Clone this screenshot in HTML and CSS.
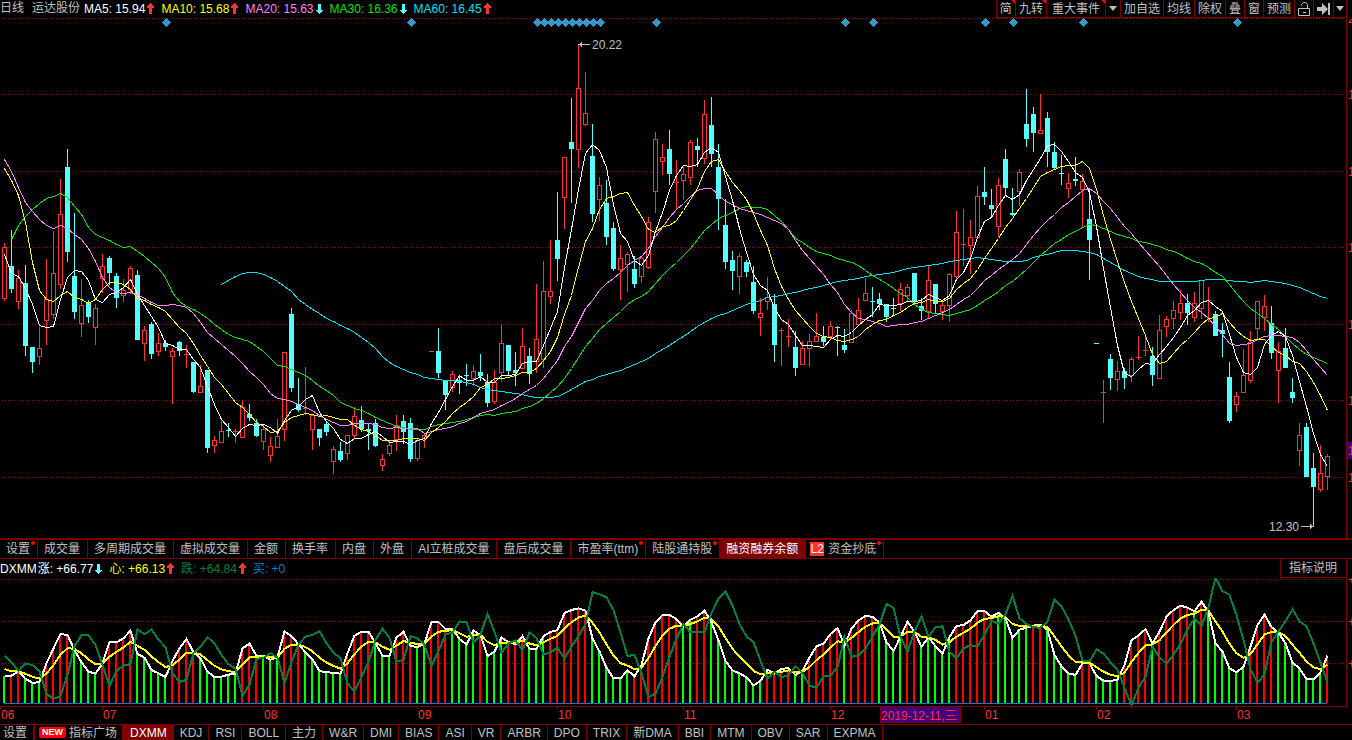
FILE: index.html
```html
<!DOCTYPE html>
<html lang="zh-CN">
<head>
    <meta charset="UTF-8">
    <meta name="viewport" content="width=device-width, initial-scale=1.0">
    <title>运达股份 日线</title>
    <link rel="stylesheet" href="styles.css">
</head>
<body>

    <header class="top-bar">
        <div class="legend">
            <span class="period">日线</span>
            <span class="stock">运达股份</span>
            <span class="item white">MA5: 15.94<svg class="arrow up" viewBox="0 0 7 12"><path d="M3 0h1v1h1v1h1v1h1v2H5v6H2V5H0V3h1V2h1V1h1z"/></svg></span>
            <span class="item yellow">MA10: 15.68<svg class="arrow up" viewBox="0 0 7 12"><path d="M3 0h1v1h1v1h1v1h1v2H5v6H2V5H0V3h1V2h1V1h1z"/></svg></span>
            <span class="item pink">MA20: 15.63<svg class="arrow down" viewBox="0 0 7 12"><path d="M2 1h3v6h2v1H6v1H5v1H4v1H3v-1H2V9H1V8H0V7h2z"/></svg></span>
            <span class="item green">MA30: 16.36<svg class="arrow down" viewBox="0 0 7 12"><path d="M2 1h3v6h2v1H6v1H5v1H4v1H3v-1H2V9H1V8H0V7h2z"/></svg></span>
            <span class="item aqua">MA60: 16.45<svg class="arrow up" viewBox="0 0 7 12"><path d="M3 0h1v1h1v1h1v1h1v2H5v6H2V5H0V3h1V2h1V1h1z"/></svg></span>
        </div>
        <div class="toolbar">
            <button class="flag">简</button>
            <button class="flag">九转</button>
            <button class="flag wide">重大事件</button>
            <button aria-label="更多事件"><svg width="8" height="5" viewBox="0 0 8 5"><path d="M0 0h8L4 5z"/></svg></button>
            <button>加自选</button>
            <button>均线</button>
            <button>除权</button>
            <button>叠</button>
            <button>窗</button>
            <button>预测</button>
            <button aria-label="锁定"><svg width="12" height="14" viewBox="0 0 12 14"><path class="line" d="M3.500 3.500v-1l2-2h2l2 2v4M.5 6.500h11v7H.5zM5 10.500h3"/></svg></button>
            <button aria-label="跳到最新"><svg width="13" height="12" viewBox="0 0 13 12"><path d="M0 4h5V0l6 6-6 6V8H0zM11 0h2v12h-2z"/></svg></button>
            <button class="last" aria-label="菜单"><svg width="8" height="5" viewBox="0 0 8 5"><path d="M0 0h8L4 5z"/></svg></button>
        </div>
    </header>

    <svg id="price" class="chart" viewBox="0 18 1352 520"></svg>

    <nav class="tabs">
        <button class="dot">设置</button>
        <button>成交量</button>
        <button>多周期成交量</button>
        <button>虚拟成交量</button>
        <button>金额</button>
        <button>换手率</button>
        <button>内盘</button>
        <button>外盘</button>
        <button>AI立桩成交量</button>
        <button>盘后成交量</button>
        <button class="dot">市盈率(ttm)</button>
        <button class="dot">陆股通持股</button>
        <button class="active">融资融券余额</button>
        <button class="dot level2"><span class="l2">L2</span>资金抄底</button>
    </nav>

    <div class="sub-bar">
        <div class="legend">
            <span class="name">DXMM</span>
            <span class="item white">涨: +66.77<svg class="arrow down" viewBox="0 0 7 12"><path d="M2 1h3v6h2v1H6v1H5v1H4v1H3v-1H2V9H1V8H0V7h2z"/></svg></span>
            <span class="item yellow">心: +66.13<svg class="arrow up" viewBox="0 0 7 12"><path d="M3 0h1v1h1v1h1v1h1v2H5v6H2V5H0V3h1V2h1V1h1z"/></svg></span>
            <span class="item dark-green">跌: +64.84<svg class="arrow up" viewBox="0 0 7 12"><path d="M3 0h1v1h1v1h1v1h1v2H5v6H2V5H0V3h1V2h1V1h1z"/></svg></span>
            <span class="item blue">买: +0</span>
        </div>
        <button class="explain">指标说明</button>
    </div>

    <svg id="dxmm" class="chart" viewBox="0 578 1352 146"></svg>

    <nav class="indicators">
        <button class="setup">设置</button>
        <button class="market"><span class="new">NEW</span>指标广场</button>
        <button class="active">DXMM</button>
        <button>KDJ</button>
        <button>RSI</button>
        <button>BOLL</button>
        <button>主力</button>
        <button>W&amp;R</button>
        <button>DMI</button>
        <button>BIAS</button>
        <button>ASI</button>
        <button>VR</button>
        <button>ARBR</button>
        <button>DPO</button>
        <button>TRIX</button>
        <button>新DMA</button>
        <button>BBI</button>
        <button>MTM</button>
        <button>OBV</button>
        <button>SAR</button>
        <button>EXPMA</button>
    </nav>

    <script src="chart.js"></script>
</body>
</html>
```
FILE: styles.css
```css
body {
    font-family: "Liberation Sans", "Noto Sans CJK SC", sans-serif;
    font-size: 12px;
    line-height: 16px;
    margin: 0;
    background-color: #000;
    color: #c0c0c0;
}

button {
    font: inherit;
    color: inherit;
    background: none;
    border: none;
    border-radius: 0;
    margin: 0;
    padding: 0;
    cursor: pointer;
    white-space: nowrap;
    flex-shrink: 0;
}

/* legends */
.legend {
    display: flex;
    gap: 7px;
    white-space: nowrap;
}

.item {
    display: flex;
    align-items: center;
}

.period {
    margin-right: 1px;
}

.stock {
    margin-right: -3px;
}

.name {
    margin-right: -6px;
}

.arrow {
    width: 7px;
    height: 12px;
    margin-left: 2px;
    shape-rendering: crispEdges;
}

.up { fill: #ff3232; }
.down { fill: #54ffff; }
.white, .name { color: #fff; }
.yellow { color: #ff0; }
.pink { color: #ff80ff; }
.green { color: #00e600; }
.aqua { color: #00e0f0; }
.dark-green { color: #008040; }
.blue { color: #0080d0; }

/* top bar */
.top-bar {
    display: flex;
    justify-content: space-between;
    height: 18px;
}

.toolbar {
    display: flex;
    height: 17px;
    margin-right: 5px;
    border-right: 1px solid #800000;
    border-bottom: 1px solid #800000;
}

.toolbar button {
    display: flex;
    align-items: center;
    position: relative;
    padding: 0 3px;
    border-left: 1px solid #800000;
    fill: #c0c0c0;
}

.toolbar .wide {
    padding: 0 5px;
}

.toolbar .last {
    padding: 0 2px;
}

.line {
    fill: none;
    stroke: #c0c0c0;
}

.flag::after {
    content: "";
    position: absolute;
    top: 0;
    right: 0;
    border-top: 4px solid #f00;
    border-left: 4px solid transparent;
}

/* charts */
.chart {
    display: block;
    width: 100%;
    height: auto;
    shape-rendering: crispEdges;
}

.grid {
    stroke: #a00000;
    stroke-dasharray: 1 2;
}

.frame {
    stroke: #800000;
}

.curve {
    fill: none;
}

.note {
    fill: #c0c0c0;
}

.note-line {
    stroke: #c0c0c0;
}

.axis {
    fill: #ff3232;
}

.cursor {
    fill: #400080;
}

.marker {
    fill: #3399cc;
}

/* tabs under the price chart */
.tabs {
    display: flex;
    height: 18px;
    border-top: 2px solid #800000;
    border-bottom: 1px solid #800000;
    line-height: 18px;
    overflow: hidden;
}

.tabs button {
    position: relative;
    padding: 0 7px 0 6px;
    border-right: 1px solid #800000;
}

.tabs .level2 {
    padding-left: 4px;
}

.tabs .active,
.indicators .active {
    background-color: #800000;
    color: #fff;
}

.dot::after {
    content: "";
    position: absolute;
    top: 1px;
    right: 2px;
    width: 4px;
    height: 4px;
    border-radius: 2px;
    background-color: #f00;
}

.l2 {
    display: inline-block;
    width: 14px;
    margin-right: 4px;
    background-color: #ff3232;
    color: #fff;
    line-height: 14px;
    text-align: center;
}

.sub-bar {
    display: flex;
    justify-content: space-between;
    height: 19px;
    line-height: 20px;
}

.explain {
    padding: 0 9px 0 8px;
    margin-right: 5px;
    border: 1px solid #800000;
    border-top: none;
    line-height: 18px;
}

/* indicator list */
.indicators {
    display: flex;
    height: 15px;
    border-top: 1px solid #800000;
    line-height: 16px;
    overflow: hidden;
}

.indicators button {
    padding: 0 6px;
    border-right: 1px solid #800000;
}

.indicators .setup {
    padding: 0 6px 0 3px;
    border-right-width: 2px;
}

.indicators .market {
    display: flex;
    align-items: center;
    gap: 3px;
    padding: 0 5px 0 4px;
}

.indicators .active {
    padding: 0 7px;
    border-right: none;
}

.new {
    padding: 0 3px;
    border-radius: 2px;
    background-color: #f00;
    color: #fff;
    font-size: 9px;
    font-weight: bold;
    line-height: 11px;
}
```
FILE: chart.js
```js
const STEP = 7;
const LEFT = 4;
const RED = '#ff3232';
const CYAN = '#54ffff';

// one candle per day: direction, high, body top, body bottom, low
const candles = `
R243,247,298,301 C230,266,289,293 R270,278,301,309 C265,283,346,356 C347,347,362,373 R327,348,356,365
R259,299,320,345 R231,273,314,319 R179,214,284,289 C149,167,252,262 C213,276,312,319 R279,305,323,337
C300,302,317,323 R304,308,327,345 R254,266,278,293 C256,258,273,285 C273,276,298,308 R279,290,295,302
R266,268,289,294 C270,275,340,340 R326,330,343,361 C322,324,354,359 R333,343,351,356 C340,343,347,351
R348,351,356,404 C341,342,351,356 R345,354,355,368 C362,362,392,393 R365,386,392,392 C370,370,448,453
R436,440,445,453 R420,431,442,442 C423,430,431,437 R429,431,432,443 R400,407,437,437 C404,414,418,421
C419,423,436,437 R425,429,441,450 R437,446,455,462 R419,436,447,448 R352,352,429,441 C308,314,388,392
C378,404,410,412 R367,408,409,415 R414,415,429,450 C429,429,438,446 C422,424,432,436 R446,449,461,474
C442,451,460,462 R435,435,453,460 R407,416,435,439 C406,420,429,432 C424,429,431,450 C419,423,446,447
R454,459,465,471 R441,445,453,456 R415,425,439,451 C415,421,432,444 C418,423,459,462 R438,440,458,461
R433,435,438,448 R351,351,352,352 C328,351,373,378 C380,380,395,410 R371,374,387,392 C375,380,383,394
C364,375,376,386 R365,371,378,386 C354,372,376,381 C374,382,403,407 R370,382,401,404 R325,343,372,382
C345,345,371,375 C352,370,373,386 R328,346,368,369 C348,356,374,384 R284,339,361,373 R261,291,359,368
R240,291,296,304 C192,240,259,281 R157,157,197,229 C98,142,149,203 R45,88,149,168 R72,113,124,126
C124,156,214,222 R177,185,199,221 C180,203,237,245 C222,228,269,271 R245,258,269,300 R252,254,264,292
C256,269,284,288 R257,258,276,283 R217,222,267,269 R132,139,191,213 R144,157,161,175 C130,149,174,185
R160,182,183,209 R167,174,180,200 R140,142,177,185 C138,146,150,167 R100,114,158,164 C97,125,154,167
C144,167,199,230 C199,225,262,269 C251,260,271,290 R253,256,276,294 C260,262,272,277 C266,282,311,314
R298,313,317,336 R277,297,301,310 C294,304,345,362 R328,330,331,366 R319,336,337,347 C331,347,368,376
R341,348,364,364 R334,341,348,367 R313,336,341,341 C326,337,342,346 R321,326,336,339 C326,327,328,356
C329,345,350,353 R310,313,342,342 R298,310,324,325 R278,293,300,301 C287,301,302,317 C293,299,304,310
C304,304,317,322 C298,308,309,316 R283,289,303,311 R284,287,295,302 C273,273,302,304 C298,306,311,320
R265,280,311,318 C284,284,304,313 R300,305,311,320 R273,274,305,322 R211,232,276,281 R209,244,245,266
R220,237,245,274 R186,196,237,237 C167,192,197,205 C189,205,209,217 R178,185,226,237 C149,159,188,195
C188,213,215,216 R169,172,191,206 C89,124,139,147 C107,114,133,152 R94,130,133,133 C112,118,152,167
C142,152,168,169 C155,173,174,185 R173,183,188,198 C157,179,181,186 R174,181,189,228 C188,219,240,280
C343,343,344,344 R380,392,393,423 C354,359,378,390 R361,371,379,391 C368,371,378,389 R357,359,375,382
R336,357,358,360 R335,350,351,356 C347,356,375,386 R315,330,378,378 R316,319,326,337 R301,310,318,329
R290,303,312,320 C294,303,313,325 R292,303,317,322 R280,280,308,319 R287,300,301,322 C311,314,336,336
C323,330,334,357 C362,377,421,423 R392,396,404,412 R349,375,392,392 R331,342,380,383 R301,301,328,339
R295,306,317,331 C306,323,353,359 R342,351,370,403 C328,348,368,368 C378,392,398,403 R423,435,450,466
C423,427,477,477 C453,468,487,526 R445,473,489,492 R454,456,476,490
`.trim().split(/\s+/).map(s => {
    const [high, top, bottom, low] = s.slice(1).split(',').map(Number);
    const up = s[0] === 'R';
    return { up, high, top, bottom, low, close: up ? top : bottom };
});

// moving averages, with the values for the days before the window is full
const averages = [
    { days: 60, color: '#00e0f0', start: 31, lead: [284,280,276,273,272,272,274,277,281,286,291,299,304,309,313,318,321,325,328,332,337,342,348,356,362,366,369,372] },
    { days: 30, color: '#00e600', start: 1, lead: [239,225,216,209,203,198,196,193,197,206,214,227,234,237,240,244,247,246,251,256,262,268,277,292,301,306,309,313] },
    { days: 20, color: '#ff80ff', start: 0, lead: [159,171,187,202,211,219,225,228,225,228,234,239,248,261,277,287,292,293,292] },
    { days: 10, color: '#ffff00', start: 0, lead: [168,180,195,222,262,290,299,301,295] },
    { days: 5, color: '#ffffff', start: 0, lead: [254,273,276,288] }
];

const markers = [166, 411, 537, 544, 551, 558, 565, 572, 579, 586, 593, 600, 656, 845, 873, 985, 1013, 1083, 1237];

// DXMM fast line, three units to a pixel, counted down from the top
const fast = [
    422,422,409,432,443,442,385,340,297,300,345,382,410,416,385,322,322,310,287,357,
    368,405,415,426,378,340,312,352,370,410,426,425,419,416,340,326,362,362,374,367,
    290,303,328,352,373,408,412,413,416,355,302,290,290,325,362,362,308,290,333,336,
    326,261,261,282,282,312,328,287,300,363,350,308,321,328,303,342,342,303,291,285,
    234,225,220,227,310,350,398,430,430,406,424,390,310,262,240,240,252,276,254,244,
    227,262,316,378,406,415,427,451,438,404,416,402,399,420,408,368,334,326,297,279,
    332,280,257,242,246,262,322,348,305,260,290,336,306,334,356,306,273,270,256,228,
    228,245,233,250,309,284,278,272,269,285,360,394,415,420,385,385,423,437,438,434,
    390,315,302,282,325,290,245,225,212,218,229,200,232,325,350,400,412,395,335,270,
    239,276,293,325,383,400,432,433,412,362
];

// lengths of the green / red runs of the histogram, green first
const runs = [1,2,3,4,4,5,5,4,6,3,3,3,6,4,3,3,2,3,4,1,3,3,3,6,6,7,2,2,8,4,2,5,1,4,4,2,5,6,5,2,5,2,4,4,1,5,1,1,6,4,7,1];

const dayX = i => LEFT + i * STEP;
const rect = (x, y, w, h, fill) => `<rect x="${x}" y="${y}" width="${w}" height="${h}" fill="${fill}"/>`;
const line = (x1, y1, x2, y2, cls) => `<path class="${cls}" d="M${x1} ${y1}L${x2} ${y2}"/>`;
const text = (x, y, str, cls) => `<text class="${cls}" x="${x}" y="${y}">${str}</text>`;

function curve(points, color, width) {
    return `<polyline class="curve" stroke="${color}" stroke-width="${width}" points="${points.join(' ')}"/>`;
}

function drawPrice() {
    let out = '';
    // only the first digit of each price fits beside the frame
    [18, 94, 171, 247, 324, 400, 477].forEach((y, i) => {
        out += line(2, y + 0.5, 1345, y + 0.5, 'grid');
        out += text(1348, y + 5, i ? 1 : 2, 'axis');
    });
    out += line(1346.5, 18, 1346.5, 538, 'frame');
    out += `<rect class="cursor" x="1347" y="442" width="5" height="17"/>` + text(1348, 455, '1', 'axis');

    candles.forEach((c, i) => {
        const x = dayX(i);
        const color = c.up ? RED : CYAN;
        const body = c.bottom - c.top;
        out += rect(x, c.high, 1, c.low - c.high, color);
        if (!c.up || body < 2) {
            out += rect(x - 2, c.top, 5, body, color);
        } else {
            out += `<rect x="${x - 1.5}" y="${c.top + 0.5}" width="4" height="${body}" fill="#000" stroke="${color}"/>`;
        }
    });

    averages.forEach(a => {
        const points = a.lead.map((y, i) => [dayX(a.start + i) + 0.5, y + 0.5]);
        for (let i = a.days - 1; i < candles.length; i++) {
            const sum = candles.slice(i - a.days + 1, i + 1).reduce((s, c) => s + c.close, 0);
            points.push([dayX(i) + 0.5, Math.round(sum / a.days) + 0.5]);
        }
        out += curve(points, a.color, 1);
    });

    markers.forEach(x => {
        out += `<path class="marker" d="M${x + 0.5} 18l4.500 4.500-4.500 4.500-4.500-4.500z"/>`;
    });

    out += line(580, 44.5, 590, 44.5, 'note-line') + `<path class="note" d="M578 44.500l4-2.500v5z"/>`;
    out += text(592, 49, '20.22', 'note');
    out += line(1301, 526.5, 1311, 526.5, 'note-line') + `<path class="note" d="M1314 526.500l-4-2.500v5z"/>`;
    out += text(1269, 531, '12.30', 'note');
    document.getElementById('price').innerHTML = out;
}

function drawDxmm() {
    const toY = v => 535 + v / 3;
    let out = '';
    [579, 621, 663].forEach(y => {
        out += line(2, y + 0.5, 1345, y + 0.5, 'grid');
        out += text(1348, y + 5, '+', 'axis');
    });

    const colors = runs.flatMap((n, i) => Array(n).fill(i % 2 ? '#ff0000' : '#00ff00'));
    const white = [];
    const yellow = [];
    const green = [];
    let slow = 402;
    fast.forEach((v, i) => {
        const x = dayX(i);
        if (i) slow += (v - slow) / 3;
        white.push([x + 0.5, toY(v)]);
        yellow.push([x + 0.5, toY(slow)]);
        green.push([x + 0.5, toY(Math.min(511, 3 * slow - 2 * v))]);
        out += rect(x - 1, Math.round(toY(v)), 2, 703 - Math.round(toY(v)), colors[i]);
    });
    out += rect(LEFT, 703, 1323, 1, '#0080d0');
    out += curve(white, '#ffffff', 2) + curve(yellow, '#ffff00', 2) + curve(green, '#008040', 2);

    out += line(0, 706.5, 1347, 706.5, 'frame') + line(1346.5, 578, 1346.5, 707, 'frame');
    const months = [[0, '06'], [102, '07'], [263, '08'], [417, '09'], [557, '10'], [683, '11'], [830, '12'], [984, '01'], [1096, '02'], [1236, '03']];
    months.forEach(([x, label]) => {
        out += line(x + 0.5, 707, x + 0.5, 710, 'frame') + text(x + 1, 719, label, 'axis');
    });
    out += `<rect class="cursor frame" x="880.500" y="706.500" width="80" height="16"/>` + text(881, 720, '2019-12-11,三', 'axis');
    document.getElementById('dxmm').innerHTML = out;
}

drawPrice();
drawDxmm();
```
